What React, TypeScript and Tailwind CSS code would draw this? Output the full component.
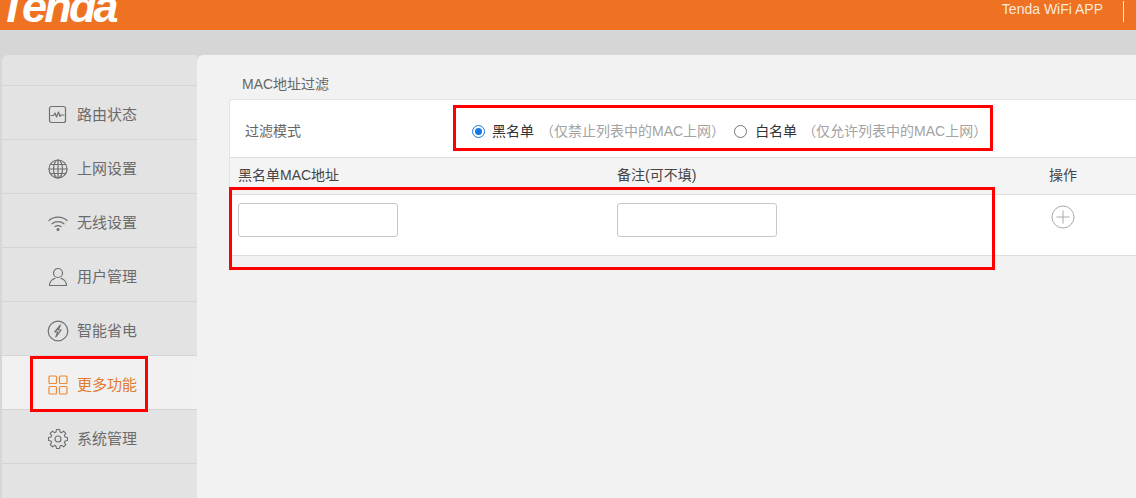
import React from "react";

const font = { fontFamily: '"Liberation Sans", "Noto Sans CJK SC", sans-serif' };

const stroke = { fill: "none", stroke: "currentColor", strokeWidth: 1.2, strokeLinecap: "round" as const, strokeLinejoin: "round" as const };

const icons: Record<string, React.ReactNode> = {
  status: (
    <svg width="20" height="20" viewBox="0 0 20 20" {...stroke}>
      <rect x="1.5" y="1.5" width="16" height="16" rx="2" />
      <path d="M3 10.5h2.5l1.5-2.5 1.5 4 2-5 1.5 4.5 1-1.5H16" />
    </svg>
  ),
  globe: (
    <svg width="20" height="20" viewBox="0 0 20 20" {...stroke}>
      <circle cx="10" cy="10" r="9" />
      <ellipse cx="10" cy="10" rx="4.5" ry="9" />
      <path d="M10 1v18M1 10h18M2.3 5.5h15.4M2.3 14.5h15.4" />
    </svg>
  ),
  wifi: (
    <svg width="20" height="16" viewBox="0 0 20 16" {...stroke}>
      <path d="M1 5.5c5-4.6 13-4.6 18 0" />
      <path d="M4 8.8c3.4-3 8.6-3 12 0" />
      <path d="M7 11.6c1.8-1.3 4.2-1.3 6 0" />
      <circle cx="10" cy="14.4" r=".9" fill="currentColor" />
    </svg>
  ),
  user: (
    <svg width="20" height="20" viewBox="0 0 20 20" {...stroke}>
      <circle cx="10" cy="6" r="4.5" />
      <path d="M1.5 18.5c0-4.2 3.2-6.6 5.4-7.2M18.5 18.5c0-4.2-3.2-6.6-5.4-7.2M1.5 18.5h17" />
    </svg>
  ),
  power: (
    <svg width="22" height="22" viewBox="0 0 22 22" {...stroke}>
      <circle cx="11" cy="11" r="9.8" />
      <path d="M13.5 5 7.8 12h3l-2 5 5.4-7h-3z" />
    </svg>
  ),
  grid: (
    <svg width="20" height="20" viewBox="0 0 20 20" {...stroke}>
      <rect x="1" y="1" width="7.5" height="7.5" rx="1" />
      <rect x="11.5" y="1" width="7.5" height="7.5" rx="1" />
      <rect x="1" y="11.5" width="7.5" height="7.5" rx="1" />
      <rect x="11.5" y="11.5" width="7.5" height="7.5" rx="1" />
    </svg>
  ),
  gear: (
    <svg width="20" height="20" viewBox="0 0 20 20" {...stroke}>
      <circle cx="10" cy="10" r="3" />
      <path d="M8.4 0h3.2l.5 2.6 1.6.7 2.2-1.5 2.3 2.3-1.5 2.2.7 1.6 2.6.5v3.2l-2.6.5-.7 1.6 1.5 2.2-2.3 2.3-2.2-1.5-1.6.7-.5 2.6H8.4l-.5-2.6-1.6-.7-2.2 1.5-2.3-2.3 1.5-2.2-.7-1.6L0 11.6V8.4l2.6-.5.7-1.6-1.5-2.2 2.3-2.3 2.2 1.5 1.6-.7z" transform="translate(.5 .5) scale(.95)" />
    </svg>
  ),
};

const menu = [
  { icon: "status", label: "路由状态" },
  { icon: "globe", label: "上网设置" },
  { icon: "wifi", label: "无线设置" },
  { icon: "user", label: "用户管理" },
  { icon: "power", label: "智能省电" },
  { icon: "grid", label: "更多功能", active: true },
  { icon: "gear", label: "系统管理" },
];

export default function App() {
  return (
    <div className="relative flex h-[498px] w-[1136px] flex-col overflow-hidden bg-[#d6d6d6]" style={font}>
      <header className="flex h-[30px] shrink-0 items-center justify-between overflow-hidden bg-[#ee7222]">
        <span className="ml-[-1px] mt-[-18px] text-[45px] font-bold italic leading-none tracking-[-2.8px] text-white">Tenda</span>
        <div className="flex items-center">
          <span className="mt-[-11px] text-[14px] text-[#fbe9dc]">Tenda WiFi APP</span>
          <span className="ml-[20px] mr-[12px] mt-[-8px] h-[21px] w-px bg-[#fbe9dc]" />
        </div>
      </header>

      <div className="mt-[25px] flex min-h-0 flex-1 pl-[2px]">
        <aside className="w-[195px] shrink-0 rounded-tl-md bg-[#e3e3e3] pt-[30px]">
          <div className="border-t border-[#d4d4d4]">
            {menu.map((m) => (
              <div
                key={m.label}
                className={`flex h-[54px] items-center border-b border-[#d4d4d4] pt-[5px] ${m.active ? "bg-[#f1f1f1] text-[#e27a2f]" : "text-[#6b6b6b]"}`}
              >
                <span className={`flex w-[75px] shrink-0 items-center justify-center pl-[37px] ${m.active ? "text-[#ee8a35]" : "text-[#707070]"}`}>
                  <span className="flex w-[22px] justify-center">{icons[m.icon]}</span>
                </span>
                <span className="text-[15px]">{m.label}</span>
              </div>
            ))}
          </div>
        </aside>

        <main className="min-w-0 flex-1 rounded-tl-md bg-[#f2f2f2] pl-[32px] pt-[20px]">
          <div className="pl-[13px] text-[14px] leading-[18px] text-[#666]">MAC地址过滤</div>
          <section className="mt-[6px] rounded-tl-[3px] border-t border-l border-[#e3e3e3] bg-white">
            <div className="flex h-[58px] items-center border-b border-[#dedede] pt-[5px]">
              <span className="ml-[15px] w-[227px] text-[14px] text-[#666]">过滤模式</span>
              <span className="h-[13px] w-[13px] rounded-full border border-[#1677e5] p-[2px]">
                <span className="block h-full w-full rounded-full bg-[#1677e5]" />
              </span>
              <span className="ml-[7px] text-[14px] text-[#333]">黑名单</span>
              <span className="ml-[6px] text-[14px] text-[#a3a3a3]">（仅禁止列表中的MAC上网）</span>
              <span className="ml-[9px] h-[13px] w-[13px] rounded-full border border-[#777]" />
              <span className="ml-[8px] text-[14px] text-[#333]">白名单</span>
              <span className="ml-[5px] text-[14px] text-[#a3a3a3]">（仅允许列表中的MAC上网）</span>
            </div>
            <div className="flex h-[37px] items-center border-b border-[#dedede] bg-[#f4f4f4] pb-[1px] text-[14px] text-[#444]">
              <span className="ml-[8px] w-[379px]">黑名单MAC地址</span>
              <span className="w-[432px]">备注(可不填)</span>
              <span>操作</span>
            </div>
            <div className="flex h-[61px] items-start border-b border-[#dedede] bg-white pt-[8px]">
              <input className="ml-[8px] h-[34px] w-[160px] rounded-[3px] border border-[#c8c8c8] bg-white" />
              <input className="ml-[219px] h-[34px] w-[160px] rounded-[3px] border border-[#c8c8c8] bg-white" />
              <svg className="ml-[274px] mt-[2px] text-[#aaa]" width="24" height="24" viewBox="0 0 24 24" fill="none" stroke="currentColor" strokeWidth="1">
                <circle cx="12" cy="12" r="11" />
                <path d="M12 5.5v13M5.5 12h13" />
              </svg>
            </div>
          </section>
        </main>
      </div>

      <div className="absolute left-[453px] top-[105px] h-[46px] w-[540px] border-[3px] border-[#f00]" />
      <div className="absolute left-[229px] top-[187px] h-[83px] w-[766px] border-[3px] border-[#f00]" />
      <div className="absolute left-[30px] top-[356px] h-[56px] w-[118px] border-[3px] border-[#f00]" />
    </div>
  );
}
